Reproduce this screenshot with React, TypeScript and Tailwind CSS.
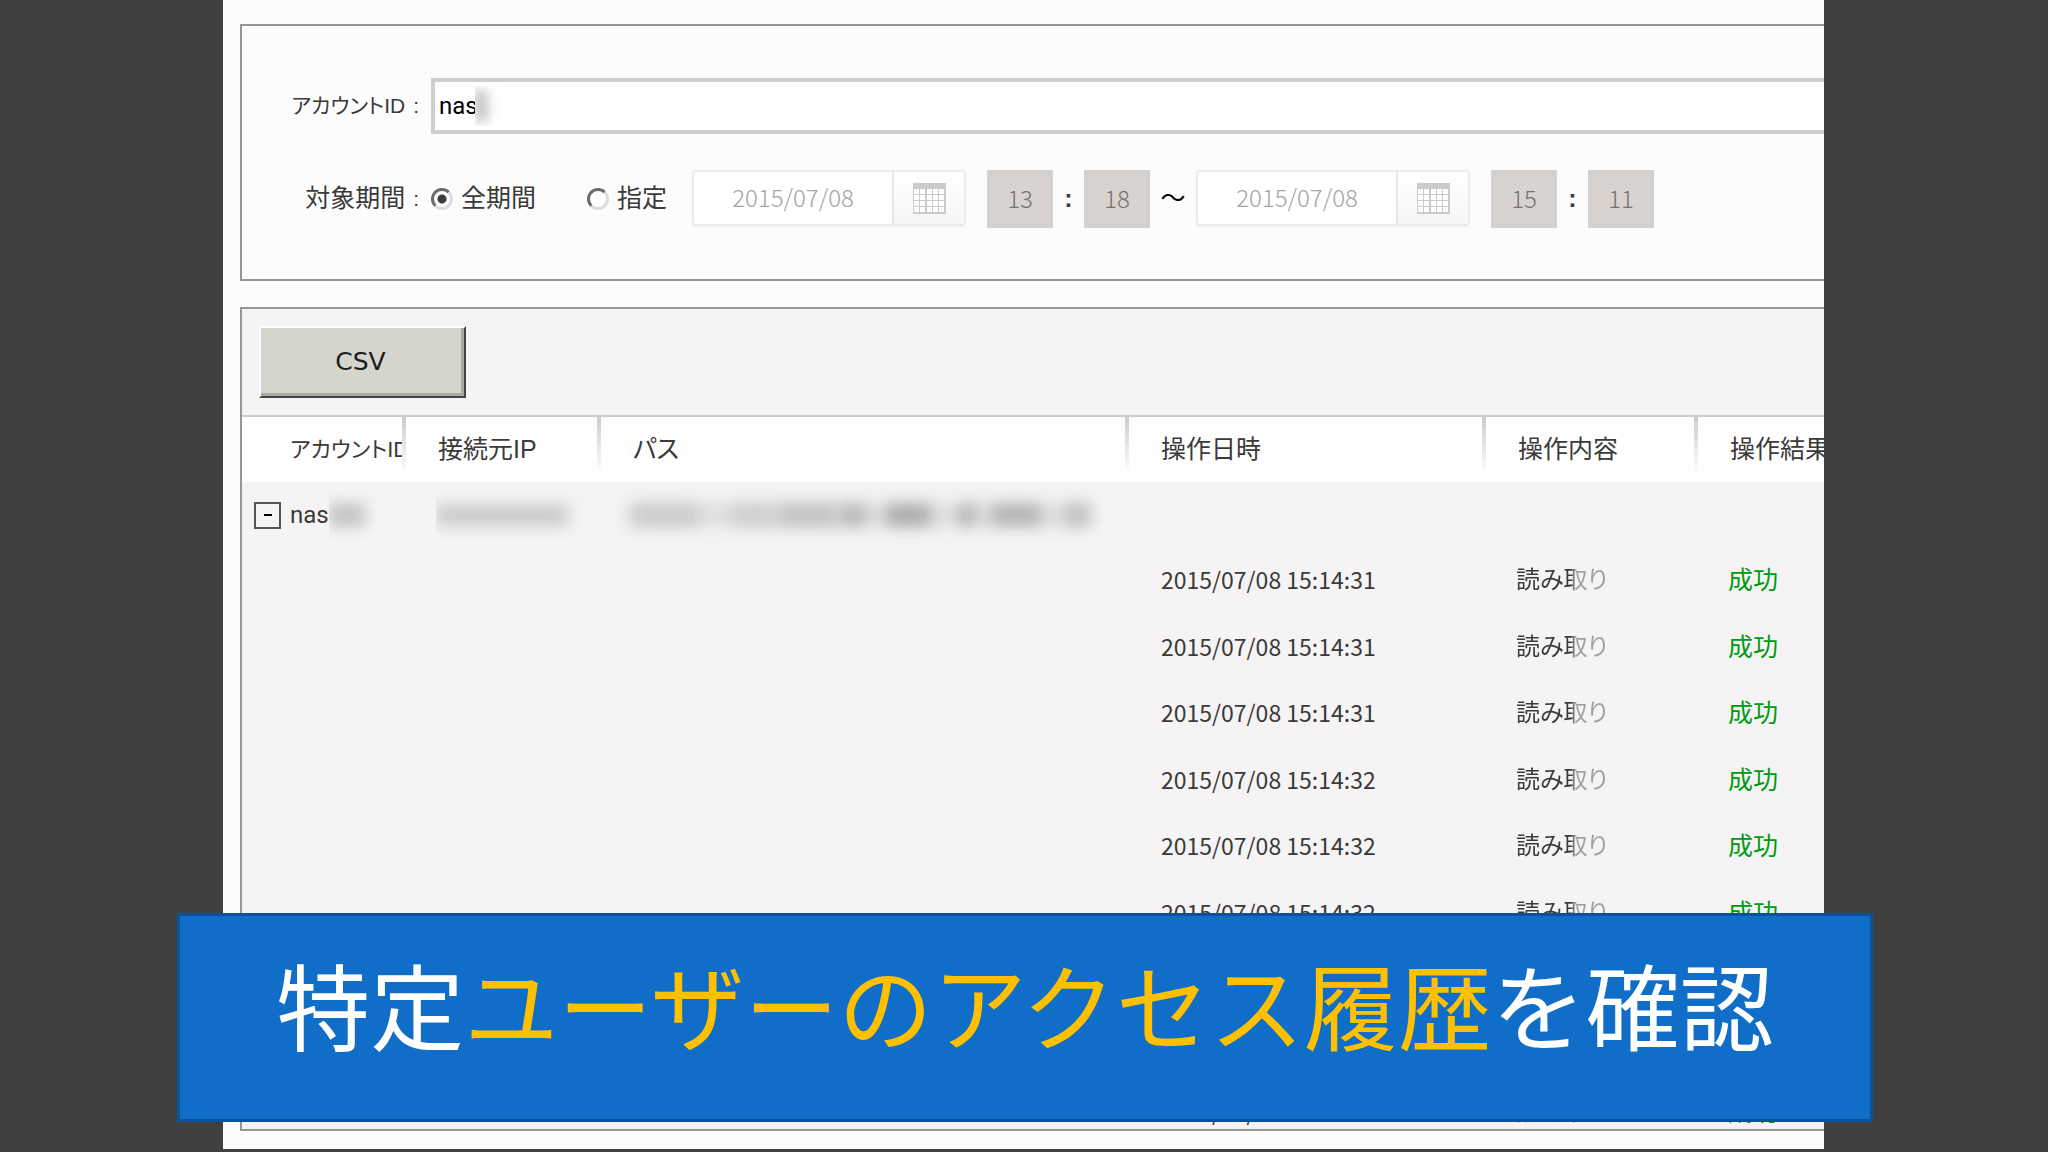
import React, { useState } from 'react';

interface LogRow {
  id: number;
  date: string;
  action: string;
  result: string;
}

interface DatePickerProps {
  label: string;
  value: string;
}

interface TimeBoxProps {
  label: string;
  value: string;
}

const logRows: LogRow[] = [
  { id: 1, date: '2015/07/08 15:14:31', action: '読み取り', result: '成功' },
  { id: 2, date: '2015/07/08 15:14:31', action: '読み取り', result: '成功' },
  { id: 3, date: '2015/07/08 15:14:31', action: '読み取り', result: '成功' },
  { id: 4, date: '2015/07/08 15:14:32', action: '読み取り', result: '成功' },
  { id: 5, date: '2015/07/08 15:14:32', action: '読み取り', result: '成功' },
  { id: 6, date: '2015/07/08 15:14:32', action: '読み取り', result: '成功' },
  { id: 7, date: '2015/07/08 15:14:32', action: '読み取り', result: '成功' },
  { id: 8, date: '2015/07/08 15:14:33', action: '読み取り', result: '成功' },
  { id: 9, date: '2015/07/08 15:14:33', action: '読み取り', result: '成功' },
];

const columns = ['アカウントID', '接続元IP', 'パス', '操作日時', '操作内容', '操作結果'];

const radioClass =
  'size-[22px] shrink-0 appearance-none rounded-full border-3 border-t-[#6a6a6a] border-l-[#6a6a6a] border-r-[#dcdcdc] border-b-[#dcdcdc] bg-white checked:bg-[radial-gradient(circle,#3c3c3c_0_4px,transparent_5px)]';

const CalendarIcon = () => (
  <svg width="33" height="31" viewBox="0 0 33 31" aria-hidden="true">
    <rect width="33" height="31" fill="#cbcbcb" />
    {[6, 12, 18, 24].map((y) =>
      [1, 7, 14, 20, 26].map((x) => (
        <rect key={`${x}-${y}`} x={x} y={y} width="5" height="5" fill="#ffffff" />
      ))
    )}
  </svg>
);

const DatePicker: React.FC<DatePickerProps> = ({ label, value }) => (
  <div className="flex h-14 w-[274px] shrink-0 self-start overflow-hidden rounded-sm border-2 border-[#ececec] shadow-xs">
    <input
      type="text"
      disabled
      aria-label={label}
      defaultValue={value}
      className="w-[198px] min-w-0 bg-white pb-[2px] text-center font-['Noto_Sans_CJK_JP',sans-serif] text-[24px] font-light text-[#a4a4a4]"
    />
    <button
      type="button"
      disabled
      aria-label={`${label}を選択`}
      className="flex flex-1 items-center justify-center border-l-2 border-[#e6e6e6] bg-linear-to-b from-white to-[#f6f6f6]"
    >
      <CalendarIcon />
    </button>
  </div>
);

const TimeBox: React.FC<TimeBoxProps> = ({ label, value }) => (
  <input
    type="text"
    disabled
    aria-label={label}
    defaultValue={value}
    className="h-[58px] w-[66px] shrink-0 border-4 border-[#d3d1d0] bg-[#d8d3ce] pb-1 text-center font-['Noto_Sans_CJK_JP',sans-serif] text-[24px] font-light text-[#75716e]"
  />
);

// Masked path value, one entry per smudge
const pathSmudges = [
  'w-[68px] bg-[#cccacb]',
  'ml-8 w-[43px] bg-[#cfcdce]',
  'ml-1 w-[57px] bg-[#c2c0c1]',
  'ml-1 w-[27px] bg-[#b6b4b5]',
  'ml-5 w-[45px] bg-[#a9a7a8]',
  'ml-7 w-[16px] bg-[#aeacad]',
  'ml-4 w-[50px] bg-[#b2b0b1]',
  'ml-6 w-[24px] bg-[#bebcbd]',
];

export default function App() {
  const [period, setPeriod] = useState('all');
  const [isExpanded, setIsExpanded] = useState(true);

  return (
    <div className="relative h-screen overflow-hidden bg-[#404040] pr-56 pb-[3px] pl-[223px] font-['Liberation_Sans','Noto_Sans_CJK_JP',sans-serif] text-[25px] text-[#3a3a3a]">
      <main className="flex h-full flex-col gap-[26px] overflow-hidden bg-[#fcfcfc] pt-6 pb-[18px] pl-[17px]">
        {/* Search conditions */}
        <form className="flex shrink-0 flex-col gap-9 border-2 border-r-0 border-[#969696] pt-[52px] pb-[51px]">
          <div className="flex h-14 items-center">
            <label
              htmlFor="account"
              className="flex w-[189px] shrink-0 items-center justify-end gap-2 pr-3 text-[21px] whitespace-nowrap [font-feature-settings:'palt']"
            >
              <span>アカウントID</span>
              <span>:</span>
            </label>
            <div className="relative h-14 flex-1">
              <input
                id="account"
                type="text"
                defaultValue="nas"
                className="h-14 w-full border-4 border-r-0 border-[#cecece] bg-white px-1 font-[Roboto,sans-serif] text-[24px] text-black outline-none"
              />
              <span className="absolute top-2 left-11 h-10 w-6 overflow-hidden bg-white py-1" aria-hidden="true">
                <span className="block h-8 w-3 bg-[#bcbcbc] blur-[6px]" />
              </span>
            </div>
          </div>

          <div className="flex h-[58px] items-center whitespace-nowrap">
            <div className="flex w-[189px] shrink-0 items-center justify-end gap-2 pr-3">
              <span>対象期間</span>
              <span className="text-[21px]">:</span>
            </div>
            <label className="mr-[51px] flex items-center gap-2">
              <input
                type="radio"
                name="period"
                checked={period === 'all'}
                onChange={() => setPeriod('all')}
                className={radioClass}
              />
              全期間
            </label>
            <label className="mr-[25px] flex items-center gap-2">
              <input
                type="radio"
                name="period"
                checked={period === 'range'}
                onChange={() => setPeriod('range')}
                className={radioClass}
              />
              指定
            </label>
            <DatePicker label="開始日" value="2015/07/08" />
            <div className="ml-[21px] flex items-center">
              <TimeBox label="開始時" value="13" />
              <span className="w-[31px] text-center font-bold">:</span>
              <TimeBox label="開始分" value="18" />
            </div>
            <span className="w-[46px] text-center text-black">～</span>
            <DatePicker label="終了日" value="2015/07/08" />
            <div className="ml-[21px] flex items-center">
              <TimeBox label="終了時" value="15" />
              <span className="w-[31px] text-center font-bold">:</span>
              <TimeBox label="終了分" value="11" />
            </div>
          </div>
        </form>

        {/* Access log */}
        <section className="min-h-0 flex-1 overflow-hidden border-2 border-r-0 border-[#969696] bg-[#f5f3f4]">
          <div className="flex h-[106px] items-start pt-[17px] pl-[17px]">
            <button
              type="button"
              className="h-[72px] w-[207px] border-2 border-t-white border-r-[#444444] border-b-[#444444] border-l-white bg-[#d5d4cd] pr-1 font-['DejaVu_Sans',sans-serif] text-[25px] text-[#1c1c1c] shadow-[inset_-3px_-3px_0_#a9a8a2]"
            >
              CSV
            </button>
          </div>

          <table className="w-full table-fixed border-collapse text-left whitespace-nowrap">
            <colgroup>
              <col className="w-[164px]" />
              <col className="w-[195px]" />
              <col className="w-[528px]" />
              <col className="w-[357px]" />
              <col className="w-[212px]" />
              <col />
            </colgroup>
            <thead>
              <tr className="h-[66px] border-t-2 border-[#cccccc]">
                {columns.map((column, index) => (
                  <th
                    key={column}
                    className={`overflow-hidden p-0 font-normal last:bg-none ${
                      index === 0 ? 'pl-12 text-[22px]' : 'pl-8'
                    } bg-[#fefefe] bg-[linear-gradient(#cccccc,#fefefe)] bg-[length:4px_56px] bg-right-top bg-no-repeat [font-feature-settings:'palt']`}
                  >
                    <span className={`block overflow-hidden ${index === 0 ? 'mr-1' : ''}`}>{column}</span>
                  </th>
                ))}
              </tr>
            </thead>
            <tbody>
              <tr className="h-[66px]">
                <td className="p-0 pl-3">
                  <div className="flex items-center">
                    <button
                      type="button"
                      aria-label="展開"
                      onClick={() => setIsExpanded(!isExpanded)}
                      className="mr-[9px] flex size-[27px] shrink-0 items-center justify-center border-2 border-[#555555] text-black"
                    >
                      <span className="h-[2px] w-2 bg-black" />
                    </button>
                    <span className="font-[Roboto,sans-serif] text-[24px]">nas</span>
                    <span className="h-12 w-12 overflow-hidden py-3" aria-hidden="true">
                      <span className="block h-6 w-9 bg-[#c6c4c5] blur-[7px]" />
                    </span>
                  </div>
                </td>
                <td className="p-0 pl-[30px]">
                  <div className="flex h-12 items-center overflow-hidden" aria-hidden="true">
                    <span className="h-5 w-[132px] bg-[#c8c6c7] blur-[8px]" />
                  </div>
                </td>
                <td className="p-0 pl-[30px]">
                  <div className="relative flex w-fit items-center" aria-hidden="true">
                    <span className="absolute inset-0 bg-[#dedcdd] blur-[8px]" />
                    {pathSmudges.map((smudge) => (
                      <span key={smudge} className={`relative h-5 blur-[8px] ${smudge}`} />
                    ))}
                  </div>
                </td>
                <td colSpan={3} />
              </tr>
              {isExpanded &&
                logRows.map((row) => (
                  <tr key={row.id} className="odd:h-[67px] even:h-[66px]">
                    <td colSpan={3} />
                    <td className="p-0 pb-1 pl-8 font-['Noto_Sans_CJK_JP',sans-serif] text-[23px] leading-7">
                      {row.date}
                    </td>
                    <td className="p-0 pb-[2px] pl-[30px] text-[24px] leading-7 [font-feature-settings:'palt']">
                      <span className="bg-linear-to-r from-[#3a3a3a] from-60% to-[#a0a0a0] to-65% bg-clip-text text-transparent">
                        {row.action}
                      </span>
                    </td>
                    <td className="p-0 pb-[2px] pl-[30px] leading-7 text-[#009a10]">{row.result}</td>
                  </tr>
                ))}
            </tbody>
          </table>
        </section>
      </main>

      {/* Caption */}
      <div className="absolute right-[175px] bottom-[30px] left-[177px] flex h-[209px] items-center justify-center border-3 border-[#0b5299] bg-[#116ec8] pb-[30px]">
        <p className="font-['Noto_Sans_CJK_JP',sans-serif] text-[94px] leading-none whitespace-nowrap text-white">
          特定<span className="text-[#ffc000]">ユーザーのアクセス履歴</span>を確認
        </p>
      </div>
    </div>
  );
}
